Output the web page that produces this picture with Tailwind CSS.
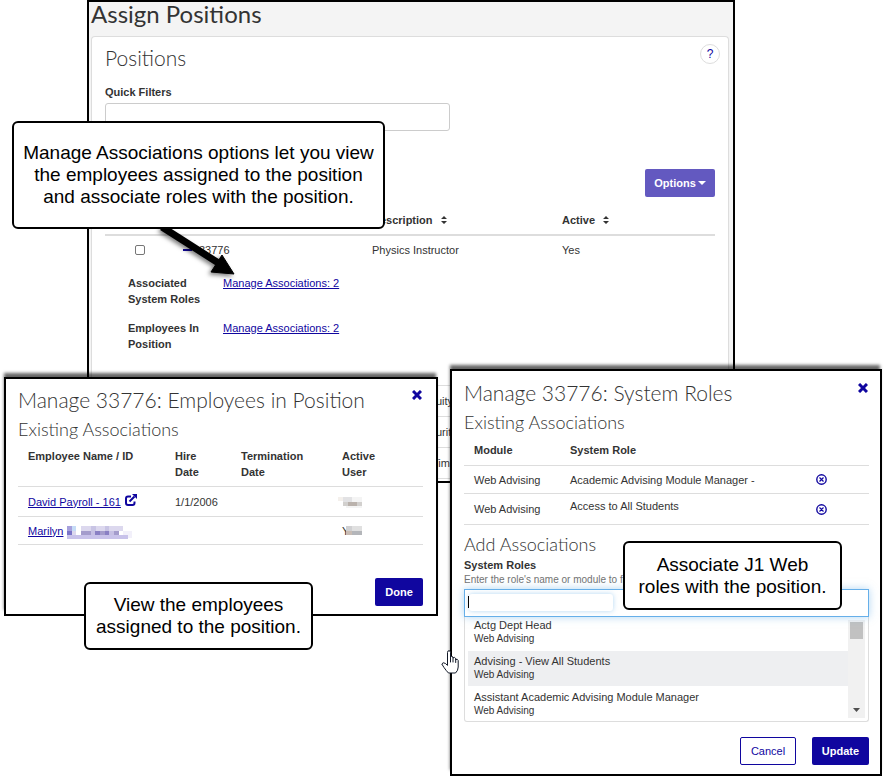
<!DOCTYPE html>
<html lang="en">
<head>
  <meta charset="UTF-8"/>
  <meta name="viewport" content="width=device-width, initial-scale=1.0"/>
  <title>Assign Positions</title>
  <script src="https://cdn.jsdelivr.net/npm/@tailwindcss/browser@4"></script>
</head>
<body class="bg-white text-[#333] font-['Liberation_Sans',Arial,sans-serif] text-[11px] leading-4">
<main class="relative min-h-screen overflow-hidden">

  <!-- Assign Positions page -->
  <section class="absolute left-[87px] top-0 w-[648px] border-2 border-black bg-[#f4f4f4]">
    <h1 class="font-['Lato',sans-serif] text-2xl leading-6 pl-0.5 pb-2.5">Assign Positions</h1>
    <div class="ml-0.5 mr-1 px-[13px] pt-[7px] pb-0.5 bg-white border border-b-0 border-[#ddd] rounded-t">
      <div class="flex items-start justify-between">
        <h2 class="font-['Lato',sans-serif] font-light text-[21px] leading-7">Positions</h2>
        <button type="button" aria-label="Help" class="-mr-[5px] size-5 rounded-full border border-[#ddd] text-[#10069f] text-xs leading-4">?</button>
      </div>

      <label for="quick-filters" class="block mt-3 font-bold">Quick Filters</label>
      <input id="quick-filters" type="text" class="block mt-[3px] w-[345px] h-7 px-2 border border-[#ccc] rounded-[3px]"/>

      <div class="flex justify-end mt-[38px]">
        <button type="button" class="flex items-center justify-center gap-0.5 w-[70px] h-7 rounded-[2px] bg-[#6359c0] text-white font-bold">
          Options
          <svg class="w-2 h-1" viewBox="0 0 8 4" fill="currentColor"><path d="M0 0h8L4 4z"/></svg>
        </button>
      </div>

      <table class="w-full table-fixed border-collapse text-left">
        <colgroup><col class="w-[78px]"/><col class="w-[189px]"/><col class="w-[190px]"/><col/></colgroup>
        <thead>
          <tr class="border-b-2 border-[#ddd]">
            <th></th>
            <th></th>
            <th class="pt-[15px] pb-1.5">
              <span class="flex items-center gap-2">Description
                <svg class="w-1.5 h-2" viewBox="0 0 6 8" fill="currentColor"><path d="M3 0l3 3H0zM3 8l3-3H0z"/></svg>
              </span>
            </th>
            <th class="pt-[15px] pb-1.5">
              <span class="flex items-center gap-2">Active
                <svg class="w-1.5 h-2" viewBox="0 0 6 8" fill="currentColor"><path d="M3 0l3 3H0zM3 8l3-3H0z"/></svg>
              </span>
            </th>
          </tr>
        </thead>
        <tbody>
          <tr>
            <td class="py-1.5 pl-[30px]"><input type="checkbox" aria-label="Select 33776" class="block size-2.5 appearance-none border border-[#767676] rounded-[2px] bg-white"/></td>
            <td class="py-1.5">
              <span class="flex items-center gap-[7px]">
                <button type="button" aria-label="Collapse row" class="w-[9px] h-0.5 bg-[#10069f]"></button>33776
              </span>
            </td>
            <td class="py-1.5">Physics Instructor</td>
            <td class="py-1.5">Yes</td>
          </tr>
          <tr>
            <td colspan="4" class="pt-[11px] pb-[33px] pl-[23px]">
              <dl class="grid grid-cols-[95px_1fr] gap-y-[13px]">
                <dt class="font-bold pr-4">Associated System Roles</dt>
                <dd><a href="#" class="text-[#10069f] underline">Manage Associations: 2</a></dd>
                <dt class="font-bold pr-4">Employees In Position</dt>
                <dd><a href="#" class="text-[#10069f] underline">Manage Associations: 2</a></dd>
              </dl>
            </td>
          </tr>
          <tr class="h-[31px] border-y border-[#ddd]"><td></td><td></td><td class="pl-16">uity</td><td></td></tr>
          <tr class="h-[31px] border-y border-[#ddd]"><td></td><td></td><td class="pl-16">urity</td><td></td></tr>
          <tr class="h-[31px] border-y border-[#ddd]"><td></td><td></td><td class="pl-[60px]">Tim</td><td></td></tr>
        </tbody>
      </table>
    </div>
  </section>

  <!-- Employees in Position dialog -->
  <section class="absolute left-1 top-[377px] w-[434px] pt-[7px] pb-2 pl-3 pr-[13px] border-2 border-black bg-white shadow-[-1px_-5px_3px_-1px_rgba(0,0,0,0.6)]">
    <div class="flex items-start justify-between">
      <h2 class="font-['Lato',sans-serif] font-light text-[21px] leading-7">Manage 33776: Employees in Position</h2>
      <button type="button" aria-label="Close" class="mt-1 mr-px text-[#10069f]">
        <svg class="size-2.5" viewBox="0 0 10 10" stroke="currentColor" stroke-width="3"><path d="M1 1l8 8M9 1L1 9"/></svg>
      </button>
    </div>
    <h3 class="mt-px font-['Lato',sans-serif] font-light text-lg leading-7">Existing Associations</h3>
    <table class="w-full table-fixed border-collapse text-left">
      <colgroup><col class="w-[157px]"/><col class="w-[66px]"/><col class="w-[101px]"/><col/></colgroup>
      <thead>
        <tr class="border-b border-[#ddd] align-top">
          <th class="pt-[5px] pb-1.5 pl-2.5">Employee Name / ID</th>
          <th class="pt-[5px] pb-1.5">Hire<br/>Date</th>
          <th class="pt-[5px] pb-1.5">Termination<br/>Date</th>
          <th class="pt-[5px] pb-1.5">Active<br/>User</th>
        </tr>
      </thead>
      <tbody>
        <tr class="h-[30px] border-b border-[#ddd]">
          <td class="pl-2.5">
            <span class="flex items-center gap-1">
              <a href="#" class="text-[#10069f] underline">David Payroll - 161</a>
              <svg class="size-3 mb-1 text-[#10069f]" viewBox="0 0 12 12" fill="none" stroke="currentColor" stroke-width="2"><path d="M6 2.500H3Q1 2.500 1 4.500V9q0 2 2 2h4.500q2 0 2-2V7.500M4.500 7.500L9.500 2.500"/><path d="M7 0h5v5z" fill="currentColor" stroke="none"/></svg>
            </span>
          </td>
          <td>1/1/2006</td>
          <td></td>
          <td>
            <svg class="w-6 h-3 -ml-1" viewBox="0 0 24 12" shape-rendering="crispEdges"><path fill="#f4f0ec" d="M0 1h5v4H0z"/><path fill="#e2e2e4" d="M5 1h9v5H5z"/><path fill="#f4f4f4" d="M14 1h10v5H14zM8 10h16v2H8z"/><path fill="#d2d0ce" d="M5 6h5v4H5zM19 6h5v4h-5z"/><path fill="#bab2ac" d="M10 6h9v4h-9z"/></svg>
          </td>
        </tr>
        <tr class="h-7 border-b border-[#ddd]">
          <td class="pl-2.5">
            <span class="flex items-center gap-1">
              <a href="#" class="text-[#10069f] underline">Marilyn</a>
              <svg class="w-[65px] h-[13px] mt-[3px]" viewBox="0 0 65 13" shape-rendering="crispEdges"><path fill="#a6a0dc" d="M0 0h5v5H0z"/><path fill="#c6dcf6" d="M5 0h4v5H5z"/><path fill="#7a74c8" d="M0 5h5v4H0z"/><path fill="#dcd8ee" d="M5 5h4v4H5zM14 0h42v5H14z"/><path fill="#c8c4e4" d="M24 0h5v5h-5zM38 0h4v5h-4z"/><path fill="#a49ccc" d="M14 5h10v4H14zM33 5h5v4h-5zM47 5h5v4h-5z"/><path fill="#c6c0e4" d="M24 5h4v4h-4zM42 5h5v4h-5z"/><path fill="#8a80c4" d="M28 5h5v4h-5zM38 5h4v4h-4z"/><path fill="#c8c2ea" d="M0 9h61v4H0z"/><path fill="#f2f0fa" d="M56 5h9v7h-4V9h-5z"/></svg>
            </span>
          </td>
          <td></td>
          <td></td>
          <td>
            <span class="flex items-center">Y
              <svg class="w-4 h-[9px] -ml-[3px]" viewBox="0 0 16 9" shape-rendering="crispEdges"><path fill="#d0d0d2" d="M0 0h6v5H0z"/><path fill="#e0e0e0" d="M6 0h10v5H6z"/><path fill="#c8bcb4" d="M0 5h6v4H0z"/><path fill="#b4b6ba" d="M6 5h10v4H6z"/></svg>
            </span>
          </td>
        </tr>
      </tbody>
    </table>
    <div class="flex justify-end mt-[33px]">
      <button type="button" class="w-12 h-7 rounded-[2px] bg-[#10069f] text-white font-bold">Done</button>
    </div>
  </section>

  <!-- System Roles dialog -->
  <section class="absolute left-[450px] top-[369px] w-[432px] pt-2 pb-[9px] pl-3 pr-[11px] border-2 border-black bg-white shadow-[-1px_-5px_3px_-1px_rgba(0,0,0,0.6)]">
    <div class="flex items-start justify-between">
      <h2 class="font-['Lato',sans-serif] font-light text-[21px] leading-7">Manage 33776: System Roles</h2>
      <button type="button" aria-label="Close" class="mt-1 mr-px text-[#10069f]">
        <svg class="size-2.5" viewBox="0 0 10 10" stroke="currentColor" stroke-width="3"><path d="M1 1l8 8M9 1L1 9"/></svg>
      </button>
    </div>
    <h3 class="mt-px font-['Lato',sans-serif] font-light text-lg leading-7">Existing Associations</h3>
    <table class="w-full table-fixed border-collapse text-left">
      <colgroup><col class="w-[106px]"/><col class="w-[246px]"/><col/></colgroup>
      <thead>
        <tr class="border-b border-[#ddd]">
          <th class="pt-1.5 pb-[7px] pl-2.5">Module</th>
          <th class="pt-1.5 pb-[7px]">System Role</th>
          <th></th>
        </tr>
      </thead>
      <tbody>
        <tr class="h-7 border-b border-[#ddd]">
          <td class="pl-2.5">Web Advising</td>
          <td>Academic Advising Module Manager -</td>
          <td>
            <button type="button" aria-label="Remove Academic Advising Module Manager" class="block text-[#10069f]">
              <svg class="size-[11px]" viewBox="0 0 11 11" fill="none" stroke="currentColor"><circle cx="5.500" cy="5.500" r="4.700" stroke-width="1.400"/><path d="M3.500 3.500l4 4M7.500 3.500l-4 4" stroke-width="1.200"/></svg>
            </button>
          </td>
        </tr>
        <tr class="h-[31px] border-b border-[#ddd]">
          <td class="pl-2.5">Web Advising</td>
          <td class="pb-1.5">Access to All Students</td>
          <td>
            <button type="button" aria-label="Remove Access to All Students" class="block text-[#10069f]">
              <svg class="size-[11px]" viewBox="0 0 11 11" fill="none" stroke="currentColor"><circle cx="5.500" cy="5.500" r="4.700" stroke-width="1.400"/><path d="M3.500 3.500l4 4M7.500 3.500l-4 4" stroke-width="1.200"/></svg>
            </button>
          </td>
        </tr>
      </tbody>
    </table>

    <h3 class="mt-[5px] font-['Lato',sans-serif] font-light text-lg leading-7">Add Associations</h3>
    <label for="system-roles" class="block -mt-px font-bold">System Roles</label>
    <p class="text-[10px] leading-4 text-[#737373] -mt-px pb-px">Enter the role's name or module to find</p>
    <div class="relative h-7 p-1 border border-[#66afe9] bg-white shadow-[0_0_8px_rgba(102,175,233,0.5)]">
      <input id="system-roles" type="text" class="block w-[144px] h-[17px] rounded-[3px] outline-none shadow-[0_0_5px_rgba(102,175,233,0.5)]"/>
      <span class="absolute left-[3px] top-1.5 w-px h-3 bg-black"></span>
    </div>
    <div class="flex h-[105px] p-[3px] border border-t-0 border-[#ddd] rounded-b-[3px]">
      <ul role="listbox" aria-label="System Roles" class="flex-1 -mt-[3px] overflow-hidden">
        <li role="option" class="h-[34px]">
          <div class="pl-1.5">Actg Dept Head<div class="text-[10px] leading-3">Web Advising</div></div>
        </li>
        <li role="option" aria-selected="true" class="h-[35px] pt-0.5 pl-1.5 bg-[#eeeff1]">Advising - View All Students<div class="text-[10px] leading-3">Web Advising</div></li>
        <li role="option" class="h-[35px] pt-[3px] pl-1.5">Assistant Academic Advising Module Manager<div class="text-[10px] leading-3">Web Advising</div></li>
      </ul>
      <div class="flex flex-col items-center justify-between w-[17px] pt-0.5 pb-1.5 bg-[#f1f1f1]">
        <div class="w-[13px] h-[17px] bg-[#c1c1c1]"></div>
        <svg class="w-[7px] h-1" viewBox="0 0 7 4" fill="#505050"><path d="M0 0h7L3.500 4z"/></svg>
      </div>
    </div>
    <div class="flex justify-end gap-4 mt-[15px]">
      <button type="button" class="w-14 h-7 rounded-[2px] border border-[#10069f] bg-white text-[#10069f]">Cancel</button>
      <button type="button" class="w-[57px] h-7 rounded-[2px] bg-[#10069f] text-white font-bold">Update</button>
    </div>
  </section>

  <!-- Arrow to the first link -->
  <svg class="absolute left-[150px] top-[220px] w-[96px] h-[64px] drop-shadow-[-2px_2px_2px_rgba(0,0,0,0.5)]" viewBox="0 0 96 64"><path d="M12 7L70 44" stroke="#000" stroke-width="7"/><path d="M84 54L61 52l11-17z" stroke="#000" fill="#000"/></svg>

  <!-- Callouts -->
  <p class="absolute left-3 top-[121px] w-[373px] py-[19px] border-2 border-black rounded-md bg-white text-black text-[19px] leading-[22px] text-center">Manage Associations options let you view<br/>the employees assigned to the position<br/>and associate roles with the position.</p>
  <p class="absolute left-[84px] top-[582px] w-[229px] py-2.5 border-2 border-black rounded-md bg-white text-black text-[19px] leading-[22px] text-center">View the employees<br/>assigned to the position.</p>
  <p class="absolute left-[623px] top-[541px] w-[219px] pt-[11px] pb-2.5 border-2 border-black rounded-md bg-white text-black text-[19px] leading-[22px] text-center">Associate J1 Web<br/>roles with the position.</p>

  <!-- Hand cursor -->
  <svg class="absolute left-[441px] top-[650px] w-[18px] h-6" viewBox="0 0 18 24" fill="#fff" stroke="#111827" stroke-linejoin="round" stroke-linecap="round"><path d="M6.500 15V2.500Q6.500 .700 8 .700t1.500 1.800V7.500Q10.500 5.500 12 7v1q1.500-1.500 2.700 .500v1q2-.800 2.500 1V17q0 3.500-2.700 6H7.500Q5 20.500 3 17.500L.800 14Q1.800 11.800 4 13.200z"/><path d="M9.500 7.500V12M12 8v4M14.700 9v3.500" fill="none"/></svg>
</main>
</body>
</html>
